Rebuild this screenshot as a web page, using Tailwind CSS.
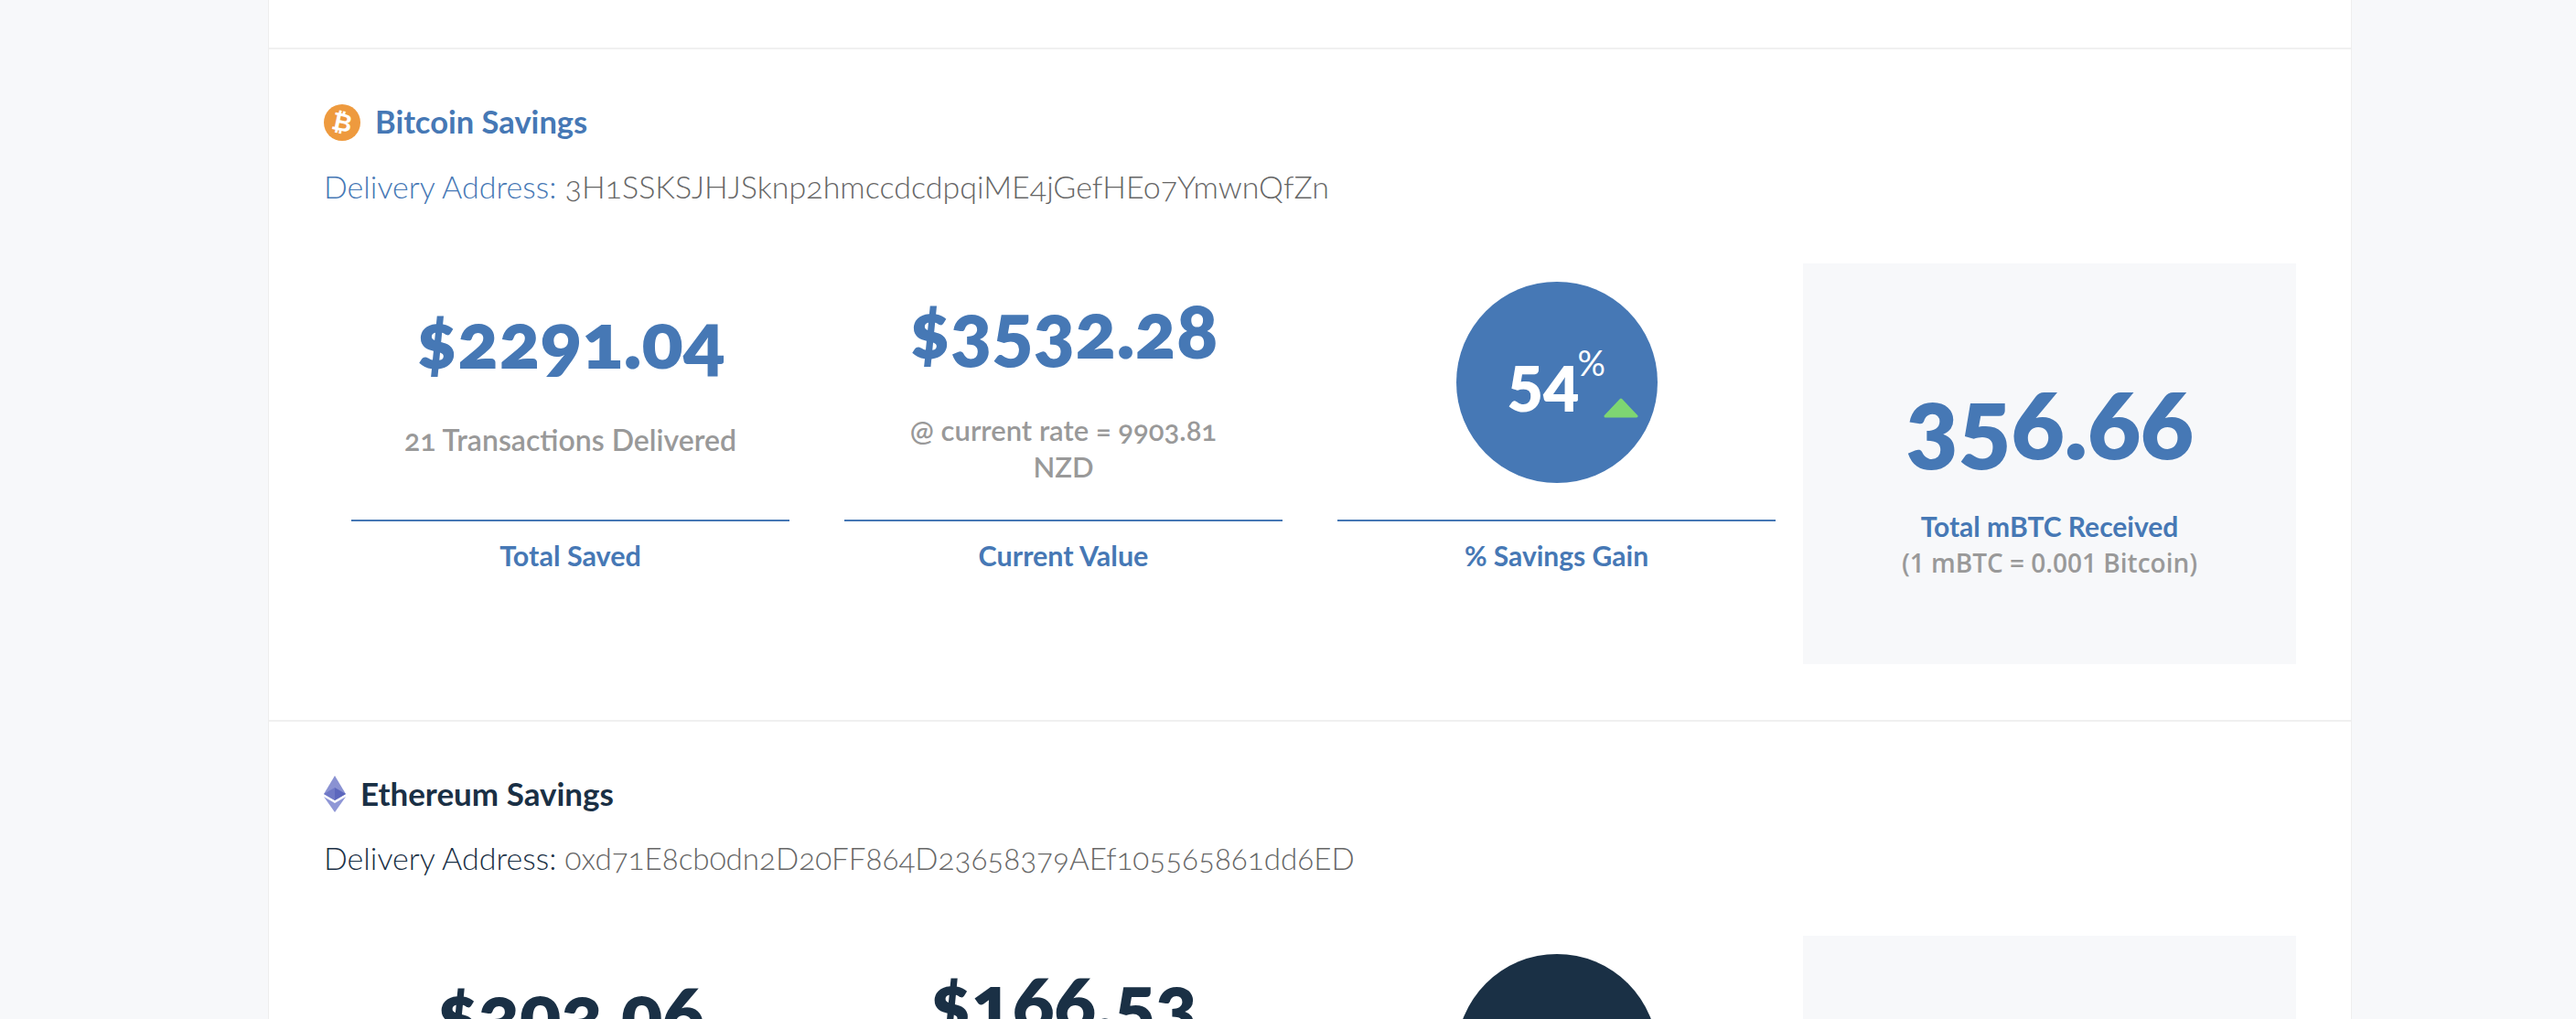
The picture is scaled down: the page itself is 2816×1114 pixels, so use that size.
<!DOCTYPE html>
<html>
<head>
<meta charset="utf-8">
<script src="https://cdn.jsdelivr.net/npm/@tailwindcss/browser@4"></script>
</head>
<body class="h-[1114px] overflow-hidden bg-[#f7f8fa] font-['Lato',sans-serif]">
<main class="ml-[293px] h-[1114px] w-[2278px] overflow-hidden border-x border-[#eeeeee] bg-white">
  <div class="h-[54px] border-b-2 border-[#f0f0f0]"></div>

  <section class="h-[735px] border-b-2 border-[#f0f0f0] px-[60px] pt-[60px] text-[#4678b5]">
    <div class="flex h-10 items-center gap-[16px]">
      <svg class="h-10 w-10 shrink-0" viewBox="0 0 40 40"><circle cx="20" cy="20" r="20" fill="#ee9a3e"/><text x="20" y="29" text-anchor="middle" font-family="Liberation Sans" font-weight="700" font-size="27" fill="#fff" transform="rotate(12 20 20)">₿</text></svg>
      <h2 class="mb-[2px] text-[34.5px] font-bold leading-none">Bitcoin Savings</h2>
    </div>
    <p class="mt-[30px] text-[34px] font-light leading-10">Delivery Address: <span class="text-[34px] text-[#666666] oldstyle-nums">3H1SSKSJHJSknp2hmccdcdpqiME4jGefHEo7YmwnQfZn</span></p>
    <div class="mt-[64px] grid h-[438px] grid-cols-4">
      <div class="px-[30px]">
        <div class="flex h-[280px] flex-col items-center pt-[33px] text-center">
          <div class="text-[84px] font-extrabold leading-[100px] oldstyle-nums">$2291.04</div>
          <div class="mt-[40px] text-[32px] font-semibold leading-10 text-[#999999] oldstyle-nums">21 Transactions Delivered</div>
        </div>
        <div class="border-t-2 border-[#4678b5] pt-[17px] text-center text-[30.5px] font-bold leading-10">Total Saved</div>
      </div>
      <div class="px-[30px]">
        <div class="flex h-[280px] flex-col items-center pt-[22px] text-center">
          <div class="text-[84px] font-extrabold leading-[100px] oldstyle-nums">$3532.28</div>
          <div class="mt-[40px] text-[31px] font-semibold leading-10 text-[#999999] oldstyle-nums">@ current rate = 9903.81<br>NZD</div>
        </div>
        <div class="border-t-2 border-[#4678b5] pt-[17px] text-center text-[30.5px] font-bold leading-10">Current Value</div>
      </div>
      <div class="px-[30px]">
        <div class="flex h-[280px] items-start justify-center pt-5">
          <div class="relative h-[220px] w-[220px] rounded-full bg-[#4678b5] text-white">
            <span class="absolute left-[56px] top-[74px] text-[68px] font-extrabold leading-[84px]">54</span>
            <span class="absolute left-[133px] top-[66px] text-[38px] leading-[44px]">%</span>
            <svg class="absolute left-[160px] top-[126px] h-6 w-10" viewBox="0 0 40 24"><path d="M20 3 L37 21 H3 Z" fill="#7ed672" stroke="#7ed672" stroke-width="3" stroke-linejoin="round"/></svg>
          </div>
        </div>
        <div class="border-t-2 border-[#4678b5] pt-[17px] text-center text-[30px] font-bold leading-10">% Savings Gain</div>
      </div>
      <div class="flex flex-col items-center bg-[#f7f8fa] pt-[113px] text-center">
        <div class="text-[107px] font-extrabold leading-[120px] oldstyle-nums">356.66</div>
        <div class="mt-[34px] text-[30px] font-bold leading-10">Total mBTC Received</div>
        <div class="font-['Open_Sans',sans-serif] text-[28px] font-semibold leading-10 text-[#999999]">(1 mBTC = 0.001 Bitcoin)</div>
      </div>
    </div>
  </section>

  <section class="px-[60px] pt-[59px] text-[#1a3045]">
    <div class="flex h-10 items-center gap-[16px]">
      <svg class="h-10 w-6 shrink-0" viewBox="0 0 24 40"><path d="M12 0 L24 20 L12 27 L0 20 Z" fill="#8a92d2"/><path d="M12 13 L24 20 L12 27 Z" fill="#5c67bd"/><path d="M12 13 L0 20 L12 27 Z" fill="#6f79c6"/><path d="M0 23 L12 30 L24 23 L12 40 Z" fill="#8f97d6"/></svg>
      <h2 class="mb-[2px] text-[35px] font-bold leading-none">Ethereum Savings</h2>
    </div>
    <p class="mt-[30px] text-[34px] font-light leading-10">Delivery Address: <span class="text-[33.2px] text-[#666666] oldstyle-nums">0xd71E8cb0dn2D20FF864D23658379AEf105565861dd6ED</span></p>
    <div class="mt-[65px] grid h-[438px] grid-cols-4">
      <div class="px-[30px]">
        <div class="flex h-[280px] flex-col items-center pt-[33px] text-center">
          <div class="text-[84px] font-extrabold leading-[100px] oldstyle-nums">$303.06</div>
        </div>
      </div>
      <div class="px-[30px]">
        <div class="flex h-[280px] flex-col items-center pt-[22px] text-center">
          <div class="text-[84px] font-extrabold leading-[100px] oldstyle-nums">$166.53</div>
        </div>
      </div>
      <div class="px-[30px]">
        <div class="flex h-[280px] items-start justify-center pt-5">
          <div class="h-[220px] w-[220px] rounded-full bg-[#1a3045]"></div>
        </div>
      </div>
      <div class="bg-[#f7f8fa]"></div>
    </div>
  </section>
</main>
</body>
</html>
